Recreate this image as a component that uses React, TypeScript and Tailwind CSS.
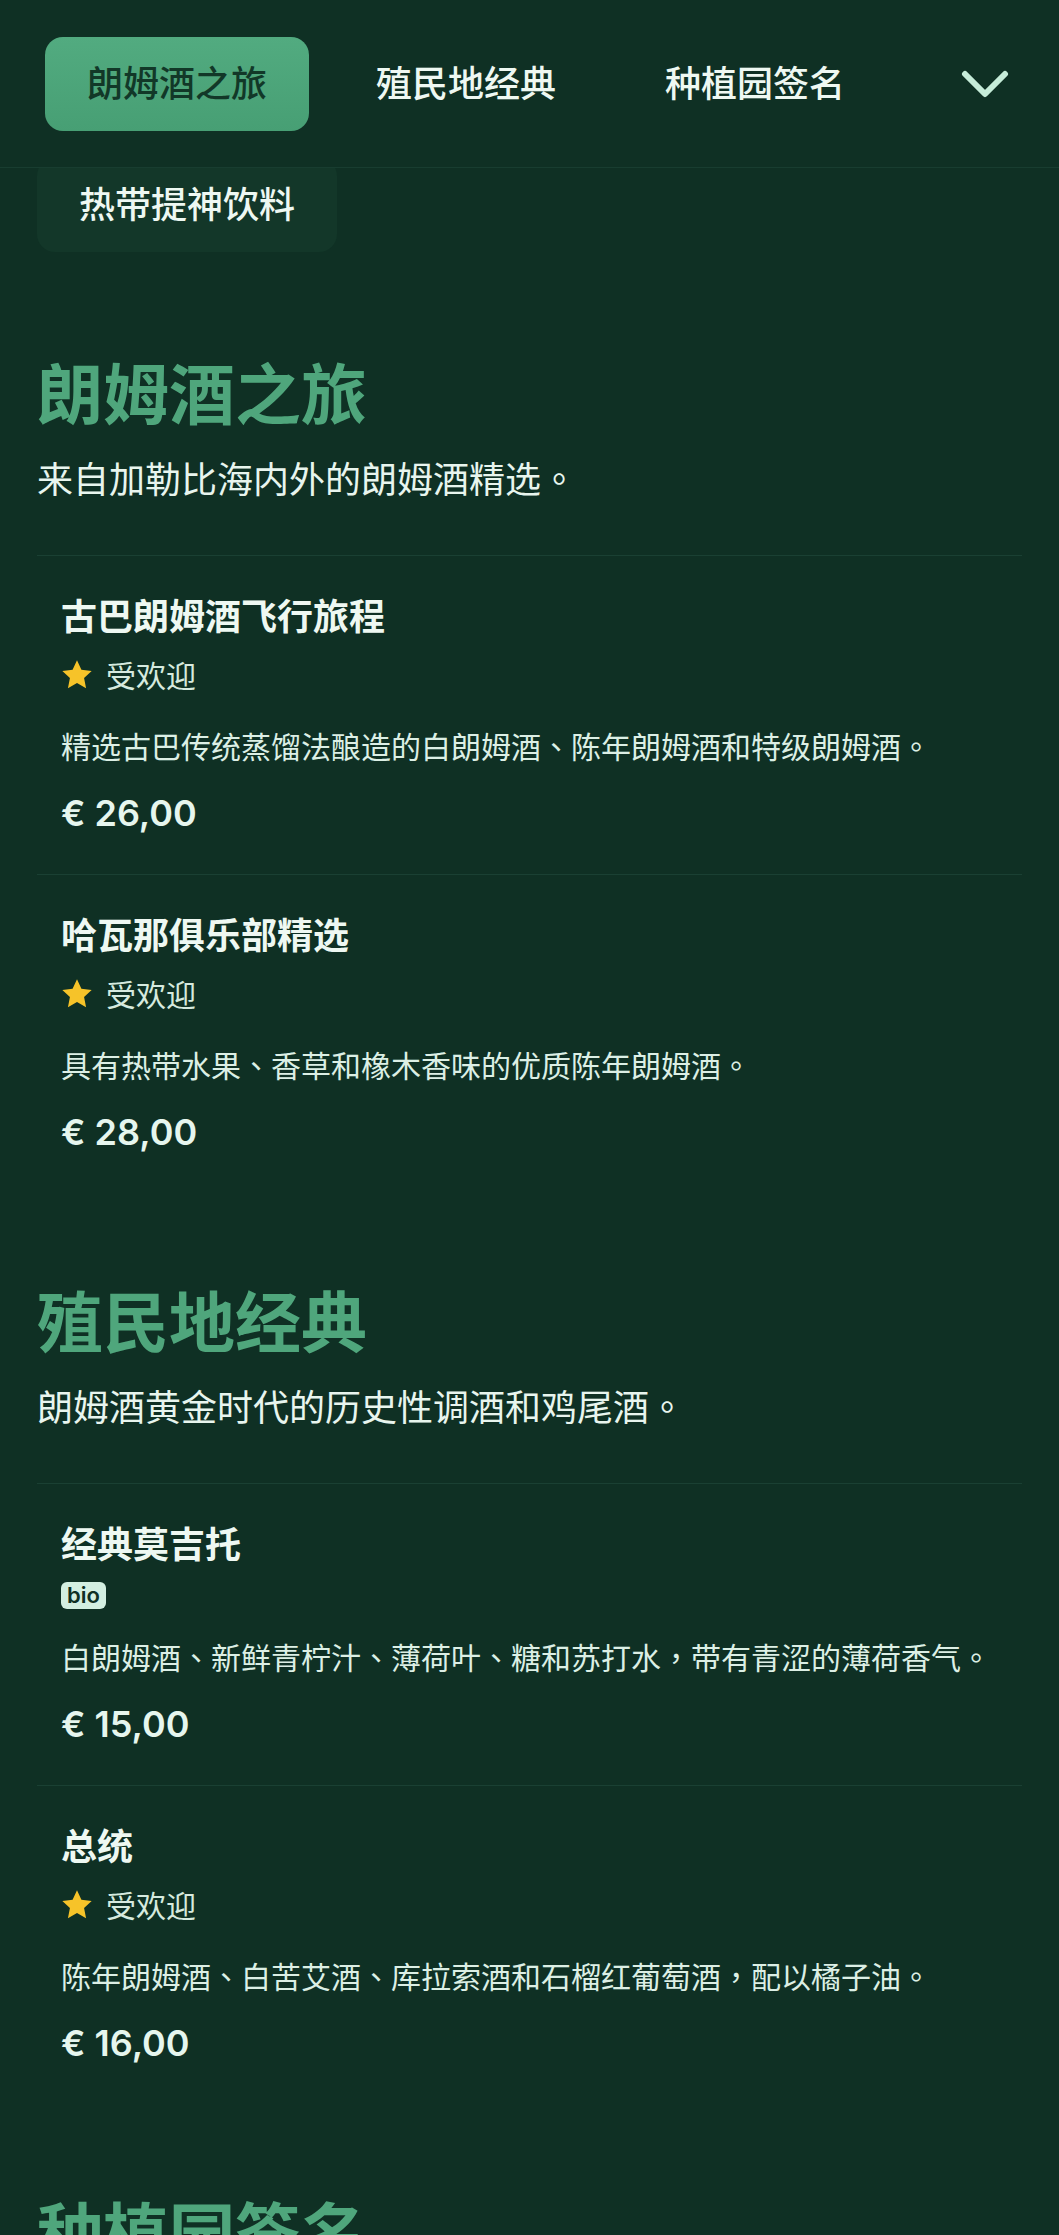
import React from "react";

type Item = {
  name: string;
  tag: "popular" | "bio";
  desc: string;
  price: string;
};

type Section = {
  title: string;
  desc: string;
  items: Item[];
};

const sections: Section[] = [
  {
    title: "朗姆酒之旅",
    desc: "来自加勒比海内外的朗姆酒精选。",
    items: [
      {
        name: "古巴朗姆酒飞行旅程",
        tag: "popular",
        desc: "精选古巴传统蒸馏法酿造的白朗姆酒、陈年朗姆酒和特级朗姆酒。",
        price: "€ 26,00",
      },
      {
        name: "哈瓦那俱乐部精选",
        tag: "popular",
        desc: "具有热带水果、香草和橡木香味的优质陈年朗姆酒。",
        price: "€ 28,00",
      },
    ],
  },
  {
    title: "殖民地经典",
    desc: "朗姆酒黄金时代的历史性调酒和鸡尾酒。",
    items: [
      {
        name: "经典莫吉托",
        tag: "bio",
        desc: "白朗姆酒、新鲜青柠汁、薄荷叶、糖和苏打水，带有青涩的薄荷香气。",
        price: "€ 15,00",
      },
      {
        name: "总统",
        tag: "popular",
        desc: "陈年朗姆酒、白苦艾酒、库拉索酒和石榴红葡萄酒，配以橘子油。",
        price: "€ 16,00",
      },
    ],
  },
  {
    title: "种植园签名",
    desc: "以种植园风味为灵感的招牌特调。",
    items: [
      {
        name: "甘蔗园之夜",
        tag: "popular",
        desc: "黑朗姆酒、甘蔗糖浆、青柠和肉桂，口感浓郁。",
        price: "€ 17,00",
      },
    ],
  },
];

function Punct({ text }: { text: string }) {
  const parts = text.split(/([、，。])/);
  return (
    <>
      {parts.map((p, i) =>
        p === "、" || p === "，" || p === "。" ? (
          <span key={i} className="font-['Noto_Sans_CJK_TC',sans-serif]">
            {p}
          </span>
        ) : (
          <React.Fragment key={i}>{p}</React.Fragment>
        )
      )}
    </>
  );
}

function Star() {
  return (
    <svg width="32" height="31" viewBox="0 0 24 23" aria-hidden="true">
      <path
        d="M12 0.8l3.3 7.1 7.7 0.9-5.7 5.3 1.5 7.7L12 17.9l-6.8 3.9 1.5-7.7L1 8.8l7.7-0.9z"
        fill="#f6c329"
      />
    </svg>
  );
}

function Chevron() {
  return (
    <svg width="48" height="30" viewBox="0 0 48 30" aria-hidden="true">
      <polyline
        points="4,5 24,25 44,5"
        fill="none"
        stroke="#c6ecd9"
        strokeWidth="6"
        strokeLinecap="round"
        strokeLinejoin="round"
      />
    </svg>
  );
}

function MenuItem({ item }: { item: Item }) {
  return (
    <div className="border-t border-[#1a4033] px-[24px] pt-[34px] pb-[37px]">
      <div className="text-[36px] leading-[48px] font-bold text-[#eef8f2]">{item.name}</div>
      {item.tag === "popular" ? (
        <div className="mt-[16px] flex h-[40px] items-center gap-[13px]">
          <Star />
          <span className="text-[30px] leading-[40px] text-[#d6eadf]">受欢迎</span>
        </div>
      ) : (
        <div className="mt-[16px] flex items-center">
          <span className="rounded-[6px] bg-[#d3efe1] px-[6px] font-['Inter',sans-serif] text-[22px] leading-[27px] font-semibold text-[#0f3024]">
            bio
          </span>
        </div>
      )}
      <div
        className={
          item.tag === "popular"
            ? "mt-[29px] text-[30px] leading-[44px] text-[#dcefe5]"
            : "mt-[25px] text-[30px] leading-[44px] text-[#dcefe5]"
        }
      >
        <Punct text={item.desc} />
      </div>
      <div className="mt-[22px] font-['Inter','Noto_Sans_CJK_SC',sans-serif] text-[36px] leading-[48px] font-semibold text-[#e6f6ee]">
        {item.price}
      </div>
    </div>
  );
}

export default function App() {
  return (
    <div className="h-[2235px] overflow-hidden bg-[#0f3024] font-['Noto_Sans_CJK_SC','Noto_Sans',sans-serif] text-[#e8f6ee]">
      <header className="relative z-10 flex h-[168px] items-start border-b border-[#183d30] bg-[#0f3024] pt-[37px] pl-[45px] pr-[50px]">
        <nav className="flex gap-[25px]">
          <button className="flex h-[94px] items-center rounded-[18px] bg-gradient-to-b from-[#52ab80] to-[#479f74] px-[42px] pb-[6px] text-[36px] font-medium text-[#123828]">
            朗姆酒之旅
          </button>
          <button className="flex h-[94px] items-center rounded-[18px] px-[42px] pb-[6px] text-[36px] font-medium text-[#eef8f2]">
            殖民地经典
          </button>
          <button className="flex h-[94px] items-center rounded-[18px] px-[42px] pb-[6px] text-[36px] font-medium text-[#eef8f2]">
            种植园签名
          </button>
        </nav>
        <div className="ml-auto flex h-[94px] items-center">
          <Chevron />
        </div>
      </header>

      <main className="px-[37px]">
        <div className="-mt-[10px] flex h-[94px] w-fit items-center rounded-[18px] bg-[#133729] px-[42px] pb-[6px] text-[36px] font-medium text-[#eef8f2]">
          热带提神饮料
        </div>

        {sections.map((s, si) => (
          <section key={s.title} className={si === 0 ? "mt-[98px]" : "mt-[85px]"}>
            <h2 className="text-[66px] leading-[80px] font-bold text-[#4fa67c]">{s.title}</h2>
            <p className="mt-[23px] text-[36px] leading-[48px] text-[#e8f5ee]">
              <Punct text={s.desc} />
            </p>
            <div className="mt-[54px]">
              {s.items.map((it) => (
                <MenuItem key={it.name} item={it} />
              ))}
            </div>
          </section>
        ))}
      </main>
    </div>
  );
}
